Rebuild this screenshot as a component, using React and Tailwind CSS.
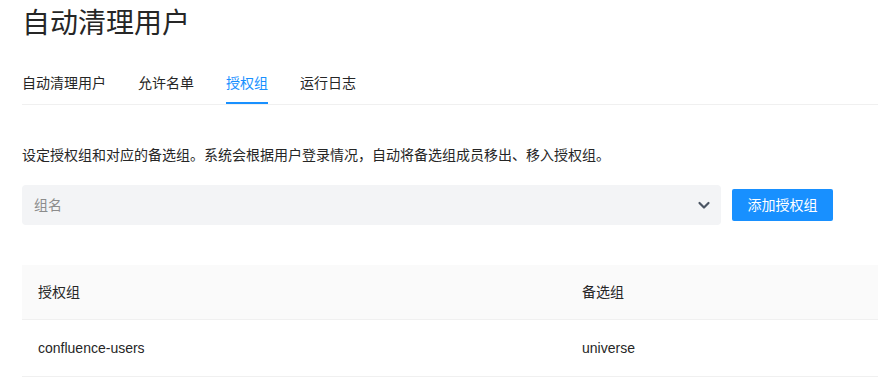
import React from "react";

const tabs = ["自动清理用户", "允许名单", "授权组", "运行日志"];

function App() {
  return (
    <div
      className="min-h-screen bg-white pl-[22px] text-[#262626]"
      style={{ fontFamily: '"Liberation Sans", "Noto Sans CJK SC", sans-serif' }}
    >
      <h1 className="h-[48px] text-[28px] leading-[48px] font-normal text-[#262626]">自动清理用户</h1>

      <div className="mt-[24px] flex gap-[32px] border-b border-[#f0f0f0]">
        {tabs.map((t) => (
          <div
            key={t}
            className={
              t === "授权组"
                ? "border-b-2 border-[#1890ff] pb-[8px] text-[14px] leading-[22px] text-[#1890ff]"
                : "border-b-2 border-transparent pb-[8px] text-[14px] leading-[22px] text-[#262626]"
            }
          >
            {t}
          </div>
        ))}
      </div>

      <p className="mt-[39px] text-[14px] leading-[22px] text-[#262626]">
        设定授权组和对应的备选组。系统会根据用户登录情况，自动将备选组成员移出、移入授权组。
      </p>

      <div className="mt-[19px] flex items-center">
        <div className="flex h-[40px] w-[699px] items-center justify-between rounded-[4px] bg-[#f3f4f6] pl-[12px] pr-[10px]">
          <span className="text-[14px] text-[#8c8c8c]">组名</span>
          <svg width="14" height="14" viewBox="0 0 14 14" fill="none">
            <path d="M2.5 5l4.5 4.5L11.5 5" stroke="#4b5563" strokeWidth="2.2" strokeLinecap="round" strokeLinejoin="round" />
          </svg>
        </div>
        <button className="ml-[11px] h-[32px] w-[101px] rounded-[2px] bg-[#1890ff] text-[14px] text-white">
          添加授权组
        </button>
      </div>

      <div className="mt-[40px] text-[14px]">
        <div className="flex h-[55px] items-center border-b border-[#f0f0f0] bg-[#fafafa]">
          <div className="w-[544px] pl-[16px]">授权组</div>
          <div className="pl-[16px]">备选组</div>
        </div>
        <div className="flex h-[57px] items-center border-b border-[#f0f0f0]">
          <div className="w-[544px] pl-[16px]">confluence-users</div>
          <div className="pl-[16px]">universe</div>
        </div>
      </div>
    </div>
  );
}

export default App;
